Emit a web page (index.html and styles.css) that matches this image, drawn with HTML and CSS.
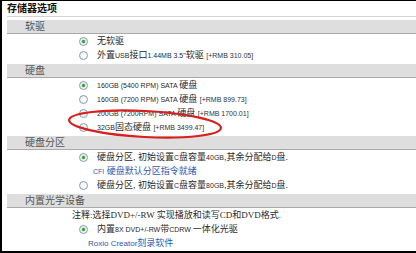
FILE: index.html
```html
<!DOCTYPE html>
<html lang="zh-CN">
<head>
<meta charset="utf-8">
<title>存储器选项</title>
<link rel="stylesheet" href="styles.css">
</head>
<body>
<div class="frame">
  <div class="title">存储器选项</div>

  <div class="bar">软驱</div>
  <div class="section">
    <div class="row"><span class="radio on"></span><span class="label">无软驱</span></div>
    <div class="row"><span class="radio"></span><span class="label">外置<span class="en">USB</span>接口<span class="en">1.44MB 3.5"</span>软驱 <span class="en price">[+RMB 310.05]</span></span></div>
  </div>

  <div class="bar">硬盘</div>
  <div class="section">
    <div class="row"><span class="radio on"></span><span class="label"><span class="en">160GB (5400 RPM) SATA </span>硬盘</span></div>
    <div class="row"><span class="radio"></span><span class="label"><span class="en">160GB (7200 RPM) SATA </span>硬盘 <span class="en price">[+RMB 899.73]</span></span></div>
    <div class="row"><span class="radio"></span><span class="label"><span class="en">200GB (7200RPM) SATA </span>硬盘 <span class="en price">[+RMB 1700.01]</span></span></div>
    <div class="row"><span class="radio"></span><span class="label"><span class="en">32GB</span>固态硬盘 <span class="en price">[+RMB 3499.47]</span></span></div>
  </div>

  <div class="bar">硬盘分区</div>
  <div class="section">
    <div class="row"><span class="radio on"></span><span class="label">硬盘分区, 初始设置<span class="en">C</span>盘容量<span class="en">40GB</span>,其余分配给<span class="en">D</span>盘.</span></div>
    <div class="row link-row"><a class="link" href="#"><span class="en">CFI</span> 硬盘默认分区指令就绪</a></div>
    <div class="row"><span class="radio"></span><span class="label">硬盘分区, 初始设置<span class="en">C</span>盘容量<span class="en">80GB</span>,其余分配给<span class="en">D</span>盘.</span></div>
  </div>

  <div class="bar">内置光学设备</div>
  <div class="section">
    <div class="row note-row"><span class="label">注释<span class="serif">:</span>选择<span class="serif">DVD+/-RW </span>实现播放和读写<span class="serif">CD</span>和<span class="serif">DVD</span>格式<span class="serif">.</span></span></div>
    <div class="row"><span class="radio on"></span><span class="label">内置<span class="en">8X DVD+/-RW</span>带<span class="en">CDRW </span>一体化光驱</span></div>
    <div class="row link-row link-row2"><a class="link" href="#"><span class="en8">Roxio Creator</span>刻录软件</a></div>
  </div>
</div>
<svg class="mark" width="416" height="253" viewBox="0 0 416 253" xmlns="http://www.w3.org/2000/svg">
  <ellipse cx="145" cy="124" rx="76" ry="13" transform="rotate(3 145 124)" fill="none" stroke="#d81e1e" stroke-width="2.2"/>
</svg>
</body>
</html>
```
FILE: styles.css
```css
html, body {
  margin: 0;
  padding: 0;
  background: #fff;
}
body {
  width: 416px;
  height: 253px;
  overflow: hidden;
  position: relative;
  font-family: "Liberation Sans", "Noto Sans CJK SC", sans-serif;
  color: #2a2a2a;
}
.frame {
  box-sizing: border-box;
  height: 253px;
  border-top: 1px solid #000;
  border-left: 2px solid #000;
  border-bottom: 2px solid #000;
  display: flex;
  flex-direction: column;
}
.title {
  height: 15px;
  line-height: 15px;
  margin-left: 5px;
  font-size: 10px;
  font-weight: bold;
  color: #111;
  border-bottom: 1px solid #d4d4d4;
  margin-bottom: 3px;
}
.bar {
  box-sizing: border-box;
  height: 14px;
  line-height: 13px;
  margin-left: 5px;
  padding-left: 18px;
  background: #dedede;
  border-bottom: 1px solid #a9a9a9;
  font-size: 10px;
  color: #555;
}
.section {
  display: flex;
  flex-direction: column;
  padding-bottom: 2px;
}
.row {
  height: 14px;
  display: flex;
  align-items: center;
  padding-left: 77px;
  font-size: 9px;
  white-space: nowrap;
}
.label {
  margin-left: 9px;
  line-height: 14px;
  color: #2a2a2a;
}
.en {
  font-size: 7px;
  font-family: "Liberation Sans", sans-serif;
}
.en8 {
  font-size: 8px;
  font-family: "Liberation Sans", sans-serif;
}
.serif {
  font-family: "Liberation Serif", serif;
  font-size: 9px;
}
.price {
  color: #333;
}
.radio {
  box-sizing: border-box;
  width: 9px;
  height: 9px;
  border-radius: 50%;
  border: 1px solid #8d9cac;
  background: radial-gradient(circle at 60% 60%, #ffffff 0%, #eef1f4 60%, #d7dde3 100%);
  position: relative;
  flex: none;
}
.radio.on::after {
  content: "";
  position: absolute;
  left: 2px;
  top: 2px;
  width: 3px;
  height: 3px;
  border-radius: 50%;
  background: #2f9e3a;
  box-shadow: 0 0 0 0.5px #8fd08f;
}
.link-row {
  padding-left: 91px;
}
.link-row2 {
  padding-left: 86px;
}
.note-row {
  padding-left: 61px;
}
.link {
  color: #2a5bb0;
  text-decoration: none;
  line-height: 14px;
}
.mark {
  position: absolute;
  left: 0;
  top: 0;
  pointer-events: none;
}
```
